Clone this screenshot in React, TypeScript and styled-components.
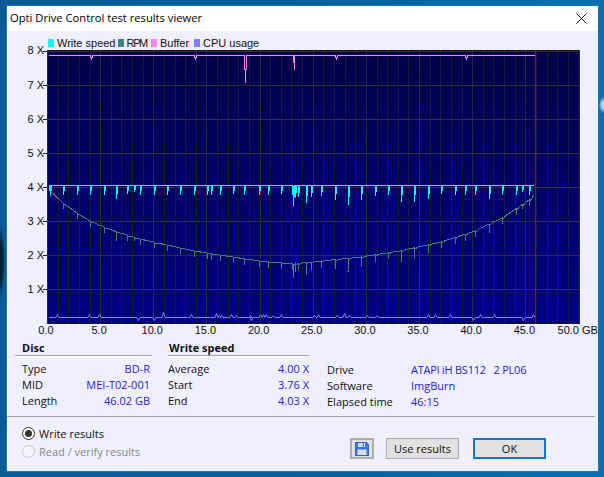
import styled, { createGlobalStyle } from 'styled-components'

const GlobalStyle = createGlobalStyle`
  html, body { margin: 0; padding: 0; }
  body { font-family: "Open Sans", "Noto Sans", sans-serif; }
`

const Desktop = styled.div`
  width: 604px;
  height: 477px;
  box-sizing: border-box;
  padding: 5px 5px 5px 6px;
  overflow: hidden;
  background:
    radial-gradient(5px 36px at 0 262px, #06202f 50%, transparent 100%),
    radial-gradient(4px 8px at 603px 105px, #a8d8f0 40%, transparent 100%),
    linear-gradient(90deg, #0b5a94 0%, #0a5f9c 50%, #0a6fb0 100%);
`
const Window = styled.div`
  height: 100%;
  box-sizing: border-box;
  border: 1px solid #1477bd;
  background: #efeffd;
  display: flex;
  flex-direction: column;
`
const TitleBar = styled.div`
  height: 25px;
  flex: none;
  box-sizing: border-box;
  background: #fff;
  display: flex;
  align-items: center;
  justify-content: space-between;
  padding: 0 11px 2px 3px;
  font-size: 11.2px;
  color: #000;
`
const CloseIcon = styled.svg`
  width: 11px;
  height: 11px;
  display: block;
  margin-top: 2px;
`
const ChartPanel = styled.div`
  height: 309px;
  flex: none;
`
const Legend = styled.div`
  display: flex;
  height: 18px;
  padding: 6px 0 0 41px;
  box-sizing: border-box;
  font-family: "Liberation Sans", Arial, sans-serif;
  font-size: 11px;
  color: #111;
  align-items: center;
`
const LegendItem = styled.span<{ $width: number; $tracking?: number }>`
  display: flex;
  align-items: center;
  gap: 3px;
  width: ${p => p.$width}px;
  letter-spacing: ${p => p.$tracking ?? 0}px;
  white-space: nowrap;
`
const Swatch = styled.i<{ $color: string }>`
  display: block;
  flex: none;
  width: 6px;
  height: 8px;
  background: ${p => p.$color};
`
const ChartSvg = styled.svg`
  display: block;
  overflow: visible;
`
const AxisLabel = styled.text`
  font-family: "Liberation Sans", Arial, sans-serif;
  font-size: 11px;
  fill: #111;
`
const Trace = styled.path<{ $soft?: boolean }>`
  fill: none;
  shape-rendering: ${p => (p.$soft ? 'auto' : 'crispEdges')};
`
const InfoRow = styled.div`
  display: grid;
  grid-template-columns: 137px 141px 1fr;
  column-gap: 16px;
  padding: 0 0 0 8px;
  height: 76px;
  flex: none;
  font-size: 11px;
`
const InfoColumn = styled.div`
  display: flex;
  flex-direction: column;
`
const GroupTitle = styled.div<{ $inset?: number }>`
  font-weight: 700;
  height: 15px;
  line-height: 15px;
  padding-left: ${p => p.$inset ?? 7}px;
  border-bottom: 1px solid #a5a5a5;
  box-shadow: 0 1px 0 #fff;
  margin-bottom: 5px;
  color: #111;
`
const Row = styled.div<{ $flush?: boolean }>`
  display: flex;
  justify-content: space-between;
  height: 16px;
  line-height: 16px;
  padding: ${p => (p.$flush ? '0' : '0 2px 0 7px')};
  color: #111;
`
const Value = styled.span<{ $tight?: boolean }>`
  color: #2a1ae0;
  letter-spacing: ${p => (p.$tight ? '-0.25px' : '0')};
`
const DriveColumn = styled.div`
  padding: 22px 0 0 2px;
`
const DriveRow = styled.div`
  display: grid;
  grid-template-columns: 84px 1fr;
  height: 16px;
  line-height: 16px;
  color: #111;
  white-space: pre;
`
const Separator = styled.div`
  height: 1px;
  background: #a5a5a5;
  flex: none;
  margin-right: 3px;
`
const Footer = styled.div`
  flex: 1;
  display: flex;
  justify-content: space-between;
  padding: 8px 52px 0 15px;
  font-size: 11px;
`
const RadioGroup = styled.div`
  display: flex;
  flex-direction: column;
  gap: 2px;
`
const RadioRow = styled.label<{ $disabled?: boolean }>`
  display: flex;
  align-items: center;
  gap: 4px;
  height: 16px;
  color: ${p => (p.$disabled ? '#8a8a8a' : '#111')};
`
const RadioDot = styled.span<{ $on?: boolean; $disabled?: boolean }>`
  width: 13px;
  height: 13px;
  box-sizing: border-box;
  border-radius: 50%;
  border: 1px solid ${p => (p.$disabled ? '#c8c8c8' : '#333')};
  background: ${p => (p.$disabled ? '#f4f4fa' : '#fff')};
  display: flex;
  align-items: center;
  justify-content: center;
  &::after {
    content: '';
    width: 7px;
    height: 7px;
    border-radius: 50%;
    background: ${p => (p.$on ? '#333' : 'transparent')};
  }
`
const Buttons = styled.div`
  display: flex;
  padding-top: 13px;
  height: 21px;
`
const Button = styled.button<{ $primary?: boolean }>`
  height: 21px;
  box-sizing: border-box;
  padding: 0;
  width: 73px;
  margin-left: ${p => (p.$primary ? '14px' : '12px')};
  border: ${p => (p.$primary ? '2px solid #0a78d7' : '1px solid #adadad')};
  background: #e1e1e1;
  font-family: inherit;
  font-size: 11px;
  color: #111;
`
const IconButton = styled.button`
  width: 24px;
  height: 21px;
  box-sizing: border-box;
  padding: 0;
  border: 2px solid #adadad;
  background: #e1e1e1;
  display: flex;
  align-items: center;
  justify-content: center;
`

// chart is drawn in window pixels; the svg starts at (7, 49)
const px = (gb: number) => 47 + gb * 10.63
const py = (x: number) => 323 - x * 34

const writeSpikes: [number, number][] = [
  [50, 9], [63, 9], [77, 9], [90, 9], [104, 9], [116, 13], [127, 8], [134, 6], [140, 9],
  [154, 9], [167, 9], [180, 9], [194, 9], [207, 9], [211, 9], [220, 9], [233, 8], [244, 9],
  [259, 9], [268, 9], [281, 8], [292, 9], [293, 20], [295, 12], [298, 11], [306, 17],
  [311, 11], [321, 10], [335, 14], [348, 19], [361, 14], [375, 10], [388, 9], [401, 16],
  [414, 16], [428, 13], [441, 8], [455, 9], [465, 9], [475, 9], [489, 13], [502, 9],
  [516, 9], [522, 6], [529, 9],
]

const rpmCurve: [number, number][] = [
  [49, 190], [63, 203], [77, 213], [90, 221], [104, 227], [117, 232], [140, 239], [167, 245],
  [194, 251], [207, 253], [259, 261], [293, 264], [321, 261], [361, 257], [400, 251],
  [441, 242], [475, 231], [502, 218], [529, 200], [534, 195],
]

const rpmAt = (x: number) => {
  for (let i = 1; i < rpmCurve.length; i++) {
    const [x0, y0] = rpmCurve[i - 1]
    const [x1, y1] = rpmCurve[i]
    if (x <= x1) return y0 + ((y1 - y0) * (x - x0)) / (x1 - x0)
  }
  return 195
}

// each dip is two pixels wide near the top and one pixel wide at the tip
const writePath = () => {
  let d = 'M49.5 191V185.5'
  writeSpikes.forEach(([x, depth]) => {
    const shoulder = 185.5 + Math.ceil(depth * 0.55)
    d += `H${x}.5V${185.5 + depth}V${shoulder}H${x + 1}.5V185.5`
  })
  return d + 'H534'
}

const rpmPath = () => {
  let d = `M49 ${rpmAt(49)}`
  let last = 49
  writeSpikes.forEach(([x, depth]) => {
    for (let s = last + 3; s < x; s += 3) d += `L${s} ${rpmAt(s).toFixed(1)}`
    const y = rpmAt(x)
    d += `L${x} ${y.toFixed(1)}L${x} ${(y + depth * 0.7).toFixed(1)}L${x + 1} ${(y + 1).toFixed(1)}`
    last = x + 1
  })
  return d + `L534 ${rpmAt(534)}`
}

const bufferPath =
  'M49 55.5H90L91.5 58.5L93 55.5H194L195.5 58.5L197 55.5H244.5V69H245.5V83V69H246.5V55.5H293.5V62H294.5V70V62V55.5H335L336.5 58.5L338 55.5H465L466.5 58.5L468 55.5H535'

const cpuUps: [number, number][] = [
  [57, 3], [89, 3], [99, 3], [163, 5], [191, 3], [216, 4], [219, 2], [221, 2], [231, 3], [236, 2],
  [250, 2], [260, 3], [263, 3], [266, 3], [273, 2], [281, 3], [314, 2], [318, 3], [337, 2], [344, 4],
  [349, 2], [367, 2], [377, 2], [428, 3], [435, 3], [450, 3], [480, 3], [494, 3], [533, 3],
]
const cpuDowns = [138, 154, 251, 473, 523]

const cpuPath = () => {
  const marks = [
    ...cpuUps.map(([x, h]) => [x, -h]),
    ...cpuDowns.map(x => [x, 3]),
  ].sort((a, b) => a[0] - b[0])
  let d = 'M49 317.5'
  marks.forEach(([x, h]) => {
    d += `H${x - 1}L${x + 0.5} ${317.5 + h}L${x + 2} 317.5`
  })
  return d + 'H535'
}

function Chart() {
  const gbs = Array.from({ length: 51 }, (_, i) => i)
  const speeds = [1, 2, 3, 4, 5, 6, 7, 8]
  const labels = [0, 5, 10, 15, 20, 25, 30, 35, 40, 45]
  return (
    <ChartSvg width={590} height={291} viewBox="7 49 590 291">
      <defs>
        <linearGradient id="plotBg" x1="0" y1="0" x2="0" y2="1">
          <stop offset="0" stopColor="#00004c" />
          <stop offset="1" stopColor="#000086" />
        </linearGradient>
      </defs>
      <rect x={47.5} y={50.5} width={532} height={273} fill="url(#plotBg)" stroke="#141414" />
      {gbs.map(g => (
        <line
          key={g}
          x1={Math.round(px(g)) + 0.5}
          x2={Math.round(px(g)) + 0.5}
          y1={50}
          y2={324}
          stroke={g % 5 === 0 ? '#2a2a28' : '#1c1c22'}
        />
      ))}
      {speeds.map(s => (
        <line key={s} x1={47} x2={579} y1={py(s) + 0.5} y2={py(s) + 0.5} stroke="#303038" />
      ))}
      {speeds.map(s => (
        <line key={s} x1={43} x2={47} y1={py(s) + 0.5} y2={py(s) + 0.5} stroke="#222" />
      ))}
      <line x1={535.5} x2={535.5} y1={50} y2={324} stroke="#800080" />
      <Trace $soft d={cpuPath()} stroke="#8080ff" />
      <Trace d={rpmPath()} stroke="#3f8078" />
      <Trace d={writePath()} stroke="#00ffff" />
      <Trace d={bufferPath} stroke="#ff80ff" />
      {speeds.map(s => (
        <AxisLabel key={s} x={44} y={py(s) + (s === 8 ? 3 : 4)} textAnchor="end">{`${s} X`}</AxisLabel>
      ))}
      {labels.map(l => (
        <AxisLabel key={l} x={px(l) - 1} y={334} textAnchor="middle">
          {l.toFixed(1)}
        </AxisLabel>
      ))}
      <AxisLabel x={579} y={334} textAnchor="end">50.0</AxisLabel>
      <AxisLabel x={582} y={334}>GB</AxisLabel>
    </ChartSvg>
  )
}

export default function App() {
  return (
    <Desktop>
      <GlobalStyle />
      <Window>
        <TitleBar>
          Opti Drive Control test results viewer
          <CloseIcon viewBox="0 0 11 11">
            <path d="M0.5 0.5L10.5 10.5M10.5 0.5L0.5 10.5" stroke="#111" fill="none" />
          </CloseIcon>
        </TitleBar>
        <ChartPanel>
          <Legend>
            <LegendItem $width={69.6}><Swatch $color="#00ffff" />Write speed</LegendItem>
            <LegendItem $width={33.4} $tracking={-1.4}><Swatch $color="#408080" />RPM</LegendItem>
            <LegendItem $width={43}><Swatch $color="#ff80ff" />Buffer</LegendItem>
            <LegendItem $width={70}><Swatch $color="#8080ff" />CPU usage</LegendItem>
          </Legend>
          <Chart />
        </ChartPanel>
        <InfoRow>
          <InfoColumn>
            <GroupTitle>Disc</GroupTitle>
            <Row>Type<Value>BD-R</Value></Row>
            <Row>MID<Value>MEI-T02-001</Value></Row>
            <Row>Length<Value>46.02 GB</Value></Row>
          </InfoColumn>
          <InfoColumn>
            <GroupTitle $inset={1}>Write speed</GroupTitle>
            <Row $flush>Average<Value>4.00 X</Value></Row>
            <Row $flush>Start<Value>3.76 X</Value></Row>
            <Row $flush>End<Value>4.03 X</Value></Row>
          </InfoColumn>
          <DriveColumn>
            <DriveRow>Drive<Value $tight>ATAPI iH BS112   2 PL06</Value></DriveRow>
            <DriveRow>Software<Value>ImgBurn</Value></DriveRow>
            <DriveRow>Elapsed time<Value>46:15</Value></DriveRow>
          </DriveColumn>
        </InfoRow>
        <Separator />
        <Footer>
          <RadioGroup>
            <RadioRow><RadioDot $on />Write results</RadioRow>
            <RadioRow $disabled><RadioDot $disabled />Read / verify results</RadioRow>
          </RadioGroup>
          <Buttons>
            <IconButton aria-label="Save">
              <svg width="14" height="14" viewBox="0 0 14 14">
                <path d="M0.5 0.5H11.5L13.5 2.5V13.5H0.5Z" fill="#3a78e0" stroke="#2f62c0" />
                <rect x="3" y="1" width="7" height="4" fill="#cfe0f8" />
                <rect x="7.5" y="1.5" width="1.5" height="3" fill="#3a78e0" />
                <rect x="2.5" y="7.5" width="9" height="5.5" fill="#d9dde6" />
              </svg>
            </IconButton>
            <Button>Use results</Button>
            <Button $primary>OK</Button>
          </Buttons>
        </Footer>
      </Window>
    </Desktop>
  )
}
